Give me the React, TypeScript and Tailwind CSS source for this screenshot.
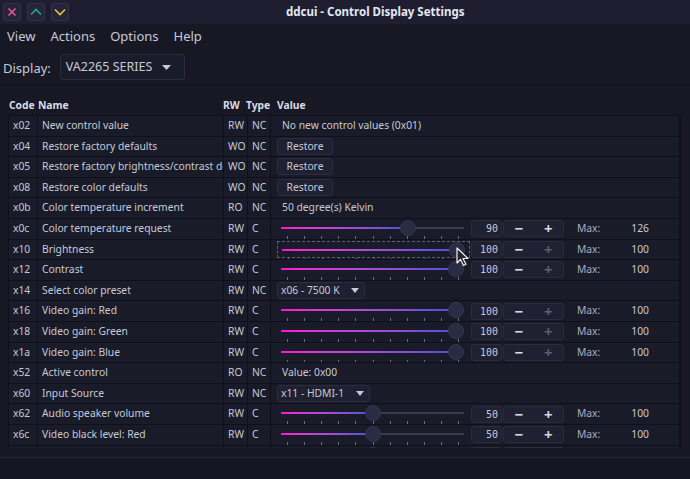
import { ReactNode } from "react";

type Row = {
  code: string;
  name: string;
  rw: string;
  type: string;
  kind: "text" | "button" | "slider" | "combo";
  text?: string;
  value?: number;
  max?: number;
  focus?: boolean;
  w?: string;
};

const rows: Row[] = [
  { code: "x02", name: "New control value", rw: "RW", type: "NC", kind: "text", text: "No new control values (0x01)" },
  { code: "x04", name: "Restore factory defaults", rw: "WO", type: "NC", kind: "button" },
  { code: "x05", name: "Restore factory brightness/contrast defaults", rw: "WO", type: "NC", kind: "button" },
  { code: "x08", name: "Restore color defaults", rw: "WO", type: "NC", kind: "button" },
  { code: "x0b", name: "Color temperature increment", rw: "RO", type: "NC", kind: "text", text: "50 degree(s) Kelvin" },
  { code: "x0c", name: "Color temperature request", rw: "RW", type: "C", kind: "slider", value: 90, max: 126 },
  { code: "x10", name: "Brightness", rw: "RW", type: "C", kind: "slider", value: 100, max: 100, focus: true },
  { code: "x12", name: "Contrast", rw: "RW", type: "C", kind: "slider", value: 100, max: 100 },
  { code: "x14", name: "Select color preset", rw: "RW", type: "NC", kind: "combo", text: "x06 - 7500 K", w: "w-[88px]" },
  { code: "x16", name: "Video gain: Red", rw: "RW", type: "C", kind: "slider", value: 100, max: 100 },
  { code: "x18", name: "Video gain: Green", rw: "RW", type: "C", kind: "slider", value: 100, max: 100 },
  { code: "x1a", name: "Video gain: Blue", rw: "RW", type: "C", kind: "slider", value: 100, max: 100 },
  { code: "x52", name: "Active control", rw: "RO", type: "NC", kind: "text", text: "Value: 0x00" },
  { code: "x60", name: "Input Source", rw: "RW", type: "NC", kind: "combo", text: "x11 - HDMI-1", w: "w-[93px]" },
  { code: "x62", name: "Audio speaker volume", rw: "RW", type: "C", kind: "slider", value: 50, max: 100 },
  { code: "x6c", name: "Video black level: Red", rw: "RW", type: "C", kind: "slider", value: 50, max: 100 },
  { code: "x6e", name: "Video black level: Green", rw: "RW", type: "C", kind: "slider", value: 50, max: 100 },
];

const ticks = [0, 1, 2, 3, 4, 5, 6, 7, 8, 9, 10];

const Slider = ({ value, max, focus }: { value: number; max: number; focus?: boolean }) => {
  const pos = 12 + (value / max) * 167;
  return (
    <div
      className={`relative w-[193px] h-full shrink-0 ${
        focus ? "border border-dashed border-[#5a5c70]" : ""
      }`}
    >
      <div className="absolute left-[4px] w-[183px] top-[7px] h-[2px] bg-[#3a3b4a]" />
      <div
        className="absolute left-[4px] top-[7px] h-[2px] bg-gradient-to-r from-[#ff0fd2] to-[#4a4fd8]"
        style={{ width: pos - 4 }}
      />
      {ticks.map((t) => (
        <div
          key={t}
          className="absolute top-[16px] w-px h-[3px] bg-[#6a6c7c]"
          style={{ left: 10 + t * 17.1 }}
        />
      ))}
      <div
        className="absolute top-0 w-[16px] h-[16px] rounded-full bg-[#2a2c43] border border-[#34364e]"
        style={{ left: pos - 8 }}
      />
    </div>
  );
};

const Spin = ({ value, max }: { value: number; max: number }) => (
  <div className="flex items-center h-full">
    <div className="ml-px w-[31px] h-[17px] bg-[#1f2031] border border-[#2b2c3e] rounded-[3px] flex items-center justify-end pr-[3px] font-['DejaVu_Sans_Mono',monospace] text-[10px]">
      {value}
    </div>
    <div className="ml-px w-[61px] h-[17px] bg-[#1f2031] border border-[#2b2c3e] rounded-[3px] flex items-center justify-around text-[15px] font-bold leading-none">
      <span className="text-[#d6d9e4]">−</span>
      <span className={value >= max ? "text-[#5d5f6e]" : "text-[#d6d9e4]"}>+</span>
    </div>
    <span className="ml-[13px] text-[#a9adba]">Max:</span>
    <span className="ml-[31px]">{max}</span>
  </div>
);

const Combo = ({ text, w }: { text: string; w?: string }) => (
  <div
    className={`${w ?? ""} h-[17px] bg-[#1f2031] border border-[#2b2c3e] rounded-[3px] flex items-center justify-between pl-[3px] pr-[5px]`}
  >
    <span>{text}</span>
    <svg width="8" height="5" viewBox="0 0 8 5">
      <path d="M0 0h8L4 5z" fill="#c6cad6" />
    </svg>
  </div>
);

const Cell = ({ w, children, grow }: { w?: string; children: ReactNode; grow?: boolean }) => (
  <div
    className={`${w ?? ""} ${grow ? "flex-1" : "shrink-0"} h-full border-r border-[#0f101a] bg-[#1a1b28] flex items-center px-[4px] overflow-hidden whitespace-nowrap`}
  >
    {children}
  </div>
);

const Value = ({ r }: { r: Row }) => {
  if (r.kind === "text") return <span className="pl-[7px]">{r.text}</span>;
  if (r.kind === "button")
    return (
      <div className="ml-[2px] w-[56px] h-[17px] bg-[#1f2031] border border-[#2b2c3e] rounded-[3px] flex items-center justify-center">
        Restore
      </div>
    );
  if (r.kind === "combo")
    return (
      <div className="ml-[2px]">
        <Combo text={r.text ?? ""} w={r.w} />
      </div>
    );
  return (
    <div className="flex items-center h-full ml-[2px] py-[1px]">
      <Slider value={r.value ?? 0} max={r.max ?? 100} focus={r.focus} />
      <Spin value={r.value ?? 0} max={r.max ?? 100} />
    </div>
  );
};

const Cursor = () => (
  <svg
    width="14"
    height="20"
    viewBox="0 0 14 20"
    className="absolute left-[456px] top-[161px]"
  >
    <path
      d="M1 1v15l3.5-3.5 3 6 2.5-1.2-3-5.8H12z"
      fill="#23252f"
      stroke="#f2f2f2"
      strokeWidth="1.2"
      strokeLinejoin="round"
    />
  </svg>
);

const TitleButton = ({ children }: { children: ReactNode }) => (
  <div className="w-[18px] h-[18px] rounded-[3px] bg-[#252539] border border-[#32324a] flex items-center justify-center">
    {children}
  </div>
);

export default function App() {
  return (
    <div className="w-[690px] h-[479px] bg-[#181825] text-[#c6cad6] font-['Noto_Sans',sans-serif] text-[10.3px] flex flex-col overflow-hidden">
      <div className="h-[24px] bg-[#1e1e30] flex items-center pl-[3px] shrink-0">
        <div className="flex gap-[6px]">
          <TitleButton>
            <svg width="10" height="10" viewBox="0 0 10 10">
              <path d="M1.5 1.5l7 7M8.5 1.5l-7 7" stroke="#e85a8d" strokeWidth="1.6" />
            </svg>
          </TitleButton>
          <TitleButton>
            <svg width="12" height="8" viewBox="0 0 12 8">
              <path d="M1 6.5l5-5 5 5" stroke="#1fa889" strokeWidth="1.6" fill="none" />
            </svg>
          </TitleButton>
          <TitleButton>
            <svg width="12" height="8" viewBox="0 0 12 8">
              <path d="M1 1.5l5 5 5-5" stroke="#e9c33a" strokeWidth="1.6" fill="none" />
            </svg>
          </TitleButton>
        </div>
        <div className="ml-[217px] font-bold text-[11.5px] text-[#e4e7f0]">
          ddcui - Control Display Settings
        </div>
      </div>

      <div className="h-[25px] flex items-center pl-[7px] gap-[15px] text-[13px] shrink-0">
        <span>View</span>
        <span>Actions</span>
        <span>Options</span>
        <span>Help</span>
      </div>

      <div className="h-[37px] border-b border-[#11121c] flex items-start pt-[5px] pl-[3px] text-[13px] shrink-0">
        <span className="mt-[5px]">Display:</span>
        <div className="ml-[9px] w-[125px] h-[26px] bg-[#1b1c2b] border border-[#2b2c3e] rounded-[3px] flex items-center pl-[5px]">
          <span className="text-[12.5px]">VA2265 SERIES</span>
          <svg width="9" height="5" viewBox="0 0 9 5" className="ml-[10px]">
            <path d="M0 0h9L4.5 5z" fill="#c6cad6" />
          </svg>
        </div>
      </div>

      <div className="relative pl-[8px] pr-[9px] pt-[10px] shrink-0">
        <div className="h-[19px] flex items-center font-bold text-[#d8dbe6]">
          <div className="w-[30px] shrink-0 pl-px">Code</div>
          <div className="w-[185px] shrink-0">Name</div>
          <div className="w-[23px] shrink-0">RW</div>
          <div className="w-[31px] shrink-0">Type</div>
          <div>Value</div>
        </div>
        <div className="h-[333px] overflow-hidden border-l border-t border-r border-[#0f101a]">
          {rows.map((r) => (
            <div key={r.code} className="h-[20.6px] flex border-b border-[#0f101a]">
              <Cell w="w-[29px]">{r.code}</Cell>
              <Cell w="w-[186px]">{r.name}</Cell>
              <Cell w="w-[24px]">{r.rw}</Cell>
              <Cell w="w-[23px]">{r.type}</Cell>
              <Cell grow>
                <Value r={r} />
              </Cell>
            </div>
          ))}
        </div>
        <Cursor />
      </div>

      <div className="h-[9px] shrink-0" />
      <div className="flex-1 border-t border-[#262638] bg-[#161622]" />
    </div>
  );
}
